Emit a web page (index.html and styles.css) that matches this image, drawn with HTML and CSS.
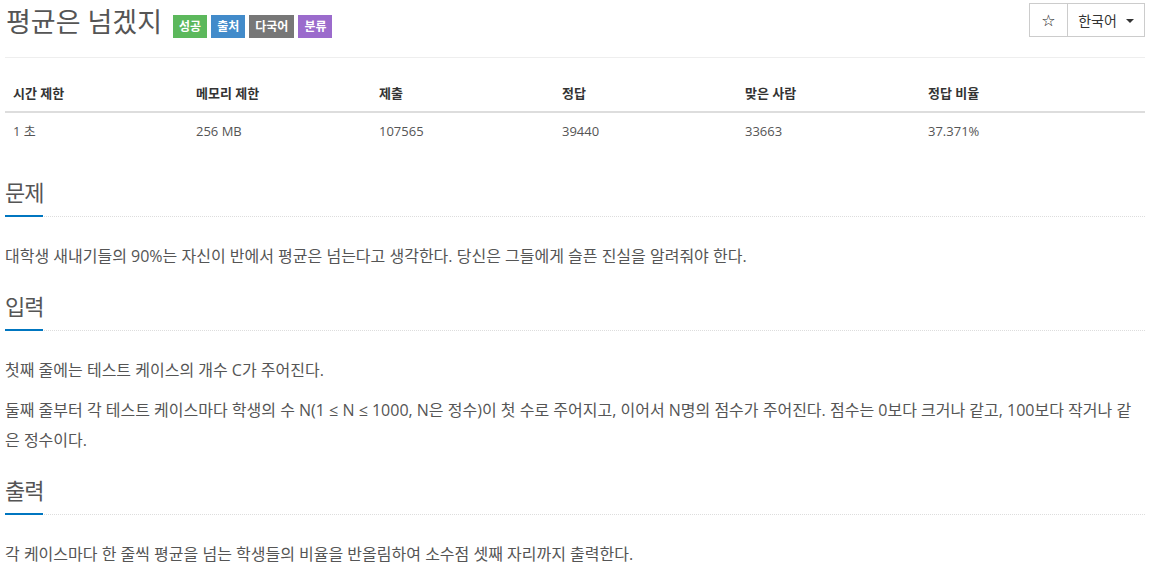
FILE: index.html
```html
<!DOCTYPE html>
<html lang="ko">
<head>
<meta charset="utf-8">
<title>평균은 넘겠지</title>
<link rel="stylesheet" href="styles.css">
</head>
<body>
<div class="container">
  <div class="page-header">
    <div class="title-row">
      <h1 class="problem-title">평균은 넘겠지</h1>
      <span class="label label-success">성공</span>
      <span class="label label-primary">출처</span>
      <span class="label label-default">다국어</span>
      <span class="label label-purple">분류</span>
    </div>
    <div class="btn-group">
      <button class="btn btn-star">☆</button>
      <button class="btn btn-lang">한국어 <span class="caret"></span></button>
    </div>
  </div>

  <table class="info-table">
    <thead>
      <tr>
        <th class="col">시간 제한</th>
        <th class="col">메모리 제한</th>
        <th class="col">제출</th>
        <th class="col">정답</th>
        <th class="col">맞은 사람</th>
        <th>정답 비율</th>
      </tr>
    </thead>
    <tbody>
      <tr>
        <td>1 초</td>
        <td>256 MB</td>
        <td>107565</td>
        <td>39440</td>
        <td>33663</td>
        <td>37.371%</td>
      </tr>
    </tbody>
  </table>

  <section class="problem-section">
    <div class="headline"><h2>문제</h2></div>
    <div class="problem-text">
      <p>대학생 새내기들의 90%는 자신이 반에서 평균은 넘는다고 생각한다. 당신은 그들에게 슬픈 진실을 알려줘야 한다.</p>
    </div>
  </section>

  <section class="problem-section">
    <div class="headline"><h2>입력</h2></div>
    <div class="problem-text">
      <p>첫째 줄에는 테스트 케이스의 개수 C가 주어진다.</p>
      <p>둘째 줄부터 각 테스트 케이스마다 학생의 수 N(1 ≤ N ≤ 1000, N은 정수)이 첫 수로 주어지고, 이어서 N명의 점수가 주어진다. 점수는 0보다 크거나 같고, 100보다 작거나 같은 정수이다.</p>
    </div>
  </section>

  <section class="problem-section">
    <div class="headline"><h2>출력</h2></div>
    <div class="problem-text">
      <p>각 케이스마다 한 줄씩 평균을 넘는 학생들의 비율을 반올림하여 소수점 셋째 자리까지 출력한다.</p>
    </div>
  </section>
</div>
</body>
</html>
```

FILE: styles.css
```css
* {
  box-sizing: border-box;
}

html, body {
  margin: 0;
  padding: 0;
  background: #fff;
}

body {
  font-family: "Open Sans", "Noto Sans CJK KR", sans-serif;
  font-size: 14px;
  color: #333;
}

.container {
  padding: 0 13px 0 5px;
}

.page-header {
  display: flex;
  justify-content: space-between;
  align-items: flex-start;
  height: 58px;
  padding-top: 3px;
  border-bottom: 1px solid #eee;
}

.title-row {
  display: flex;
  align-items: flex-start;
}

.problem-title {
  margin: 2px 11px 0 1px;
  font-size: 27px;
  line-height: 34px;
  font-weight: 400;
  color: #555;
}

.label {
  display: inline-block;
  margin: 12px 4px 0 0;
  padding: 4px 6px;
  font-size: 12px;
  line-height: 15px;
  font-weight: 700;
  color: #fff;
  white-space: nowrap;
}

.label-success { background: #5cb85c; }
.label-primary { background: #428bca; }
.label-default { background: #777; }
.label-purple { background: #9b6bcc; }

.btn-group {
  display: flex;
  height: 34px;
  border: 1px solid #ccc;
}

.btn {
  font-family: "Open Sans", "Noto Sans CJK KR", sans-serif;
  background: #fff;
  border: 0;
  margin: 0;
  padding: 0;
  font-size: 14px;
  color: #333;
  display: flex;
  align-items: center;
  justify-content: center;
}

.btn-star {
  width: 38px;
  border-right: 1px solid #ccc;
  font-family: "DejaVu Sans", sans-serif;
  font-size: 16px;
  font-weight: 700;
  color: #222;
}

.btn-lang {
  width: 76px;
  gap: 9px;
}

.caret {
  display: inline-block;
  width: 0;
  height: 0;
  border-top: 4px solid #333;
  border-left: 4px solid transparent;
  border-right: 4px solid transparent;
  margin-top: 2px;
}

.info-table {
  width: 100%;
  margin-top: 17px;
  border-collapse: collapse;
  font-size: 13px;
}

.info-table th,
.info-table td {
  text-align: left;
  padding: 8px;
  line-height: 20px;
}

.info-table th {
  font-weight: 700;
  color: #333;
  border-bottom: 2px solid #ddd;
}

.info-table th.col {
  width: 183px;
}

.info-table td {
  color: #555;
}

.problem-section {
  margin-top: 28px;
}

.problem-section + .problem-section {
  margin-top: 20px;
}

.headline {
  display: flex;
  border-bottom: 1px dotted #ddd;
}

.headline h2 {
  margin: 0 0 -1px 0;
  font-size: 22px;
  letter-spacing: -1px;
  line-height: 30px;
  font-weight: 400;
  color: #555;
  padding-bottom: 8px;
  border-bottom: 2px solid #0076c0;
}

.problem-text {
  margin-top: 24px;
}

.problem-text p {
  margin: 0 0 10px 0;
  font-size: 16px;
  line-height: 30px;
  color: #555;
  word-break: break-all;
}

.problem-text p:last-child {
  margin-bottom: 0;
}
```
